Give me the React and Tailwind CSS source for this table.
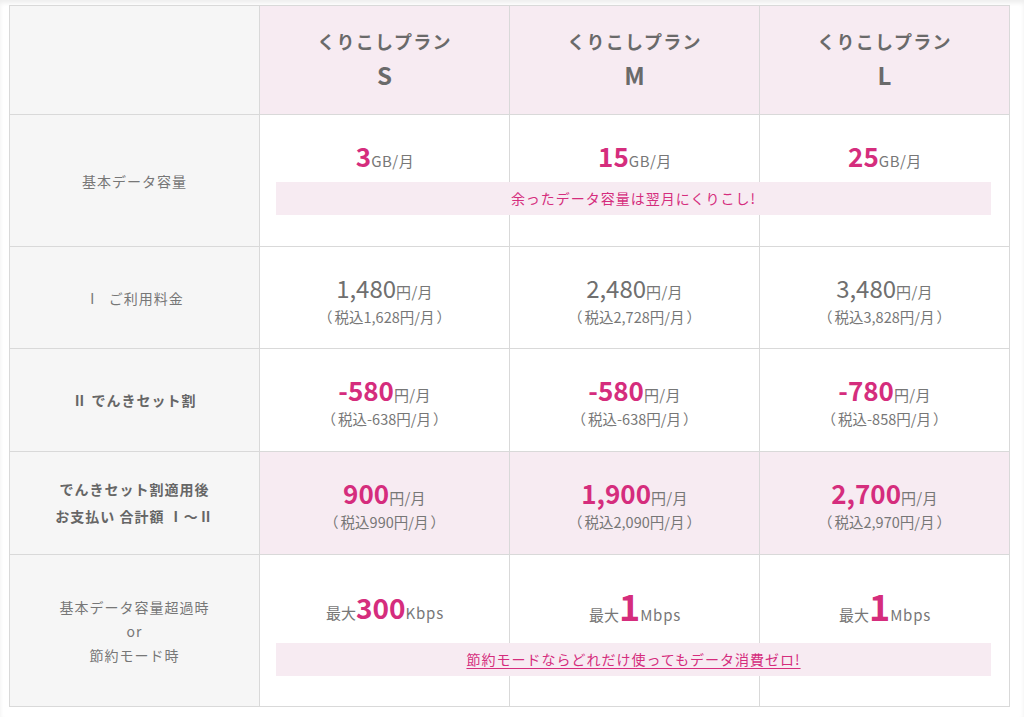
import React from "react";

const M = "text-[#d52d7d]";
const G = "text-[#777777]";
const cellB = "border-r border-b border-[#d9d9d9]";

function Label({ children, bold, h }) {
  return (
    <div
      className={`${cellB} bg-[#f6f6f6] flex flex-col items-center justify-center text-center text-[14px] tracking-[1px] ${bold ? "font-bold text-[#666666] leading-[27px]" : "text-[#777777] leading-[24px]"} ${h}`}
    >
      {children}
    </div>
  );
}

function Price({ num, bold, sub, bg, h }) {
  return (
    <div className={`${cellB} ${bg || "bg-white"} ${h} flex flex-col items-center justify-center pt-[4px]`}>
      <div className="flex items-baseline h-[32px]">
        <span
          className={
            bold
              ? `text-[26px] font-bold ${M} leading-[32px]`
              : `text-[24px] text-[#6f6f6f] leading-[32px]`
          }
        >
          {num}
        </span>
        <span className={`text-[15px] ${G} tracking-[0.3px]`}>円/月</span>
      </div>
      <div className={`flex items-baseline text-[14.5px] ${G} leading-[22px] mt-[2px]`}>
        <span className="inline-block w-[1em] mr-[2px] text-right">（</span>
        <span>税込{sub}円/月</span>
        <span className="inline-block w-[1em] ml-[2px] text-left">）</span>
      </div>
    </div>
  );
}

function SpanBlock({ top, values, band, underline, h }) {
  return (
    <div className={`col-span-3 grid grid-cols-3 ${h} grid-rows-[auto_33px_1fr] border-b border-[#d9d9d9] bg-white`}>
      <div className="col-start-1 row-start-1 row-span-3 border-r border-[#d9d9d9]" />
      <div className="col-start-2 row-start-1 row-span-3 border-r border-[#d9d9d9]" />
      <div className="col-start-3 row-start-1 row-span-3 border-r border-[#d9d9d9]" />
      {values.map((v, i) => (
        <div
          key={i}
          className={`row-start-1 ${["col-start-1", "col-start-2", "col-start-3"][i]} ${top} flex items-center justify-center`}
        >
          {v}
        </div>
      ))}
      <div className="row-start-2 col-start-1 col-span-3 ml-[16px] mr-[19px] bg-[#f7ebf2] flex items-center justify-center">
        <span className={`text-[14px] tracking-[1px] ${M} ${underline ? "underline underline-offset-[3px]" : ""}`}>{band}</span>
      </div>
    </div>
  );
}

function GB({ n }) {
  return (
    <div className="flex items-baseline">
      <span className={`text-[26px] font-bold ${M} leading-[32px]`}>{n}</span>
      <span className={`text-[15px] ${G} tracking-[0.5px]`}>GB/月</span>
    </div>
  );
}

function Speed({ n, unit, big }) {
  return (
    <div className="flex items-baseline">
      <span className={`text-[15px] ${G}`}>最大</span>
      <span className={`${big ? "text-[36px]" : "text-[28px]"} font-bold ${M} leading-[36px]`}>{n}</span>
      <span className={`text-[15px] ${G} tracking-[0.8px]`}>{unit}</span>
    </div>
  );
}

function Head({ size }) {
  return (
    <div className={`${cellB} bg-[#f7ebf2] h-[109px] flex flex-col items-center justify-center pb-[5px] text-[#6a6a6a] font-bold`}>
      <div className="text-[18px] tracking-[1.2px] leading-[34px]">くりこしプラン</div>
      <div className="text-[24px] leading-[34px]">{size}</div>
    </div>
  );
}

export default function App() {
  return (
    <div className="min-h-[717px] w-[1024px] bg-white pt-[5px] pl-[9px] shadow-[inset_0_3px_4px_rgba(0,0,0,0.07)] font-['Noto_Sans_CJK_JP','Noto_Sans',sans-serif]">
      <div className="w-[1001px] grid grid-cols-[250px_250px_250px_250px] border-l border-t border-[#d9d9d9]">
        {/* header */}
        <div className={`${cellB} bg-[#f6f6f6] h-[109px]`} />
        <Head size="S" />
        <Head size="M" />
        <Head size="L" />

        {/* row 1 */}
        <Label h="h-[132px]">基本データ容量</Label>
        <SpanBlock
          h="h-[132px]"
          top="h-[67px] pt-[16px]"
          values={[<GB n="3" />, <GB n="15" />, <GB n="25" />]}
          band="余ったデータ容量は翌月にくりこし!"
        />

        {/* row 2 */}
        <Label h="h-[102px]">Ⅰ&nbsp;&nbsp;ご利用料金</Label>
        <Price h="h-[102px]" num="1,480" sub="1,628" />
        <Price h="h-[102px]" num="2,480" sub="2,728" />
        <Price h="h-[102px]" num="3,480" sub="3,828" />

        {/* row 3 */}
        <Label h="h-[103px]" bold>Ⅱ&nbsp;でんきセット割</Label>
        <Price h="h-[103px]" num="-580" sub="-638" bold />
        <Price h="h-[103px]" num="-580" sub="-638" bold />
        <Price h="h-[103px]" num="-780" sub="-858" bold />

        {/* row 4 */}
        <Label h="h-[103px]" bold>
          <span>でんきセット割適用後</span>
          <span>お支払い 合計額 Ⅰ～Ⅱ</span>
        </Label>
        <Price h="h-[103px]" num="900" sub="990" bold bg="bg-[#f7ebf2]" />
        <Price h="h-[103px]" num="1,900" sub="2,090" bold bg="bg-[#f7ebf2]" />
        <Price h="h-[103px]" num="2,700" sub="2,970" bold bg="bg-[#f7ebf2]" />

        {/* row 5 */}
        <Label h="h-[152px]">
          <span>基本データ容量超過時</span>
          <span>or</span>
          <span>節約モード時</span>
        </Label>
        <SpanBlock
          h="h-[152px]"
          top="h-[88px] pt-[16px]"
          values={[
            <Speed n="300" unit="Kbps" />,
            <Speed n="1" unit="Mbps" big />,
            <Speed n="1" unit="Mbps" big />,
          ]}
          band="節約モードならどれだけ使ってもデータ消費ゼロ!"
          underline
        />
      </div>
    </div>
  );
}
